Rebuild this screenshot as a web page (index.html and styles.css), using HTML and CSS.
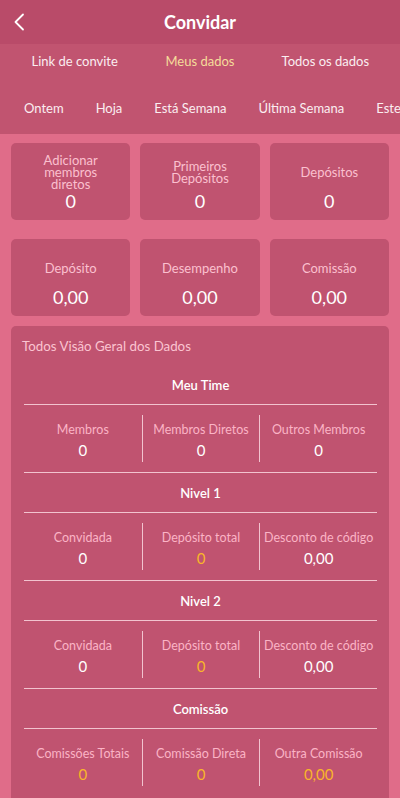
FILE: index.html
```html
<!DOCTYPE html>
<html lang="pt">
<head>
<meta charset="utf-8">
<title>Convidar</title>
<link rel="stylesheet" href="styles.css">
</head>
<body>
<div class="app">
  <header class="topbar">
    <button class="back" aria-label="Voltar">
      <svg width="12" height="18" viewBox="0 0 12 18"><polyline points="10,1.5 2.5,9 10,16.5" fill="none" stroke="#fff" stroke-width="1.8" stroke-linecap="round" stroke-linejoin="round"/></svg>
    </button>
    <h1 class="title">Convidar</h1>
  </header>

  <nav class="tabs">
    <div class="tabs-main">
      <span class="tab">Link de convite</span>
      <span class="tab active">Meus dados</span>
      <span class="tab">Todos os dados</span>
    </div>
    <div class="tabs-period">
      <span class="period">Ontem</span>
      <span class="period">Hoja</span>
      <span class="period">Está Semana</span>
      <span class="period">Última Semana</span>
      <span class="period">Este Mês</span>
      <span class="period">Mês Passado</span>
    </div>
  </nav>

  <main class="content">
    <section class="cards">
      <div class="card"><div class="card-label">Adicionar membros diretos</div><div class="card-value">0</div></div>
      <div class="card"><div class="card-label">Primeiros Depósitos</div><div class="card-value">0</div></div>
      <div class="card"><div class="card-label">Depósitos</div><div class="card-value">0</div></div>
      <div class="card"><div class="card-label">Depósito</div><div class="card-value">0,00</div></div>
      <div class="card"><div class="card-label">Desempenho</div><div class="card-value">0,00</div></div>
      <div class="card"><div class="card-label">Comissão</div><div class="card-value">0,00</div></div>
    </section>

    <section class="panel">
      <div class="panel-title">Todos Visão Geral dos Dados</div>

      <div class="group-title">Meu Time</div>
      <div class="stats">
        <div class="stat"><div class="stat-label">Membros</div><div class="stat-value">0</div></div>
        <div class="stat"><div class="stat-label">Membros Diretos</div><div class="stat-value">0</div></div>
        <div class="stat"><div class="stat-label">Outros Membros</div><div class="stat-value">0</div></div>
      </div>

      <div class="group-title">Nivel 1</div>
      <div class="stats">
        <div class="stat"><div class="stat-label">Convidada</div><div class="stat-value">0</div></div>
        <div class="stat"><div class="stat-label">Depósito total</div><div class="stat-value gold">0</div></div>
        <div class="stat"><div class="stat-label">Desconto de código</div><div class="stat-value">0,00</div></div>
      </div>

      <div class="group-title">Nivel 2</div>
      <div class="stats">
        <div class="stat"><div class="stat-label">Convidada</div><div class="stat-value">0</div></div>
        <div class="stat"><div class="stat-label">Depósito total</div><div class="stat-value gold">0</div></div>
        <div class="stat"><div class="stat-label">Desconto de código</div><div class="stat-value">0,00</div></div>
      </div>

      <div class="group-title">Comissão</div>
      <div class="stats last">
        <div class="stat"><div class="stat-label">Comissões Totais</div><div class="stat-value gold">0</div></div>
        <div class="stat"><div class="stat-label">Comissão Direta</div><div class="stat-value gold">0</div></div>
        <div class="stat"><div class="stat-label">Outra Comissão</div><div class="stat-value gold">0,00</div></div>
      </div>
    </section>
  </main>
</div>
</body>
</html>
```

FILE: styles.css
```css
* { box-sizing: border-box; }
html, body { margin: 0; padding: 0; }
body {
  background: #e06c89;
  font-family: Lato, "Open Sans", sans-serif;
  color: #fff;
  overflow: hidden;
}
.app { width: 400px; }

.topbar {
  height: 44px;
  background: #b94b69;
  display: flex;
  align-items: center;
  justify-content: center;
  position: relative;
}
.back {
  position: absolute;
  left: 13px;
  top: 13px;
  width: 12px;
  height: 18px;
  padding: 0;
  border: 0;
  background: none;
  display: flex;
}
.title {
  margin: 0;
  font-size: 18px;
  font-weight: 700;
  line-height: 22px;
}

.tabs { background: #c15470; }
.tabs-main {
  height: 34px;
  display: flex;
  align-items: center;
  padding: 0 12px;
}
.tab {
  flex: 1;
  text-align: center;
  font-size: 13px;
  color: #fbeef1;
}
.tab.active { color: #f5dc9a; }
.tabs-period {
  height: 56px;
  display: flex;
  align-items: center;
  white-space: nowrap;
  overflow: hidden;
  padding: 3px 0 0 8px;
}
.period {
  flex: none;
  padding: 0 16px;
  font-size: 13px;
  color: #fbeef1;
}

.content { padding: 9px 11px 0; }
.cards {
  display: grid;
  grid-template-columns: repeat(3, 1fr);
  column-gap: 10px;
  row-gap: 19px;
}
.card {
  height: 77px;
  background: #c05370;
  border-radius: 5px;
  padding: 11px 16px 0;
  text-align: center;
}
.card-label {
  height: 36px;
  display: flex;
  align-items: center;
  justify-content: center;
  font-size: 13px;
  line-height: 12px;
  color: #fbc0cf;
}
.card-value {
  line-height: 22px;
  font-size: 18px;
  color: #fff;
}

.panel {
  margin-top: 10px;
  background: #c05370;
  border-radius: 5px 5px 0 0;
  padding: 0 12px 8px 13px;
}
.panel-title {
  height: 39px;
  display: flex;
  align-items: center;
  margin-left: -2px;
  font-size: 13.3px;
  color: #fbc4d1;
}
.group-title {
  height: 40px;
  border-bottom: 1px solid #f2c3cf;
  display: flex;
  align-items: center;
  justify-content: center;
  font-size: 13px;
  font-weight: 600;
  color: #fff;
}
.stats {
  display: grid;
  grid-template-columns: repeat(3, 1fr);
  padding: 10px 0;
  border-bottom: 1px solid #f2c3cf;
}
.stats.last { border-bottom: 0; }
.stat {
  height: 47px;
  padding-top: 5px;
  text-align: center;
  border-left: 1px solid #f2c3cf;
}
.stat:first-child { border-left: 0; }
.stat-label {
  line-height: 20px;
  font-size: 12.5px;
  color: #fbb4c6;
  white-space: nowrap;
}
.stat-value {
  line-height: 21px;
  font-size: 15px;
  color: #fff;
}
.stat-value.gold { color: #f9b52a; }
```
